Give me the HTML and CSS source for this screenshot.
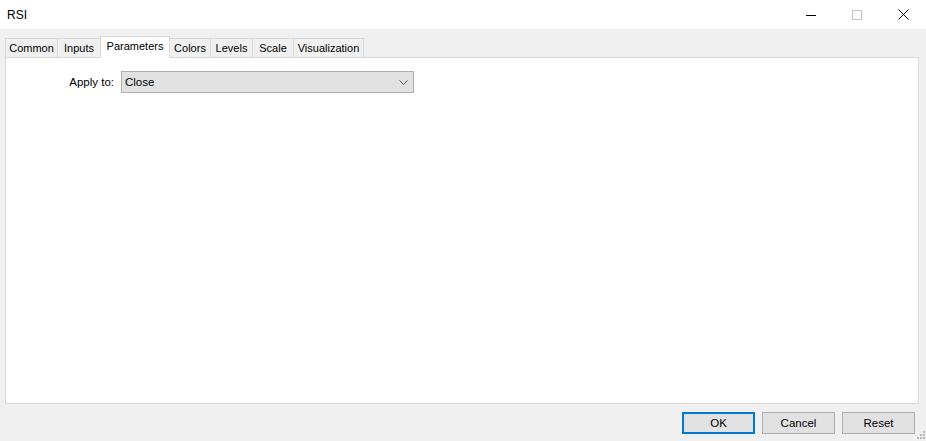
FILE: index.html
```html
<!DOCTYPE html>
<html lang="en">
<head>
    <meta charset="UTF-8">
    <title>RSI</title>
    <link rel="stylesheet" href="styles.css">
</head>
<body>
    <div class="window">
        <div class="titlebar">
            <span class="title">RSI</span>
            <div class="win-controls">
                <div class="win-btn">
                    <svg width="10" height="10" viewBox="0 0 10 10"><path d="M0 5.5H10" stroke="#000" stroke-width="1"/></svg>
                </div>
                <div class="win-btn">
                    <svg width="10" height="10" viewBox="0 0 10 10"><rect x="0.5" y="0.5" width="9" height="9" fill="none" stroke="#c4c4c4" stroke-width="1"/></svg>
                </div>
                <div class="win-btn">
                    <svg width="11" height="11" viewBox="0 0 11 11"><path d="M0.5 0.5L10.5 10.5M10.5 0.5L0.5 10.5" stroke="#000" stroke-width="1"/></svg>
                </div>
            </div>
        </div>

        <div class="content">
            <div class="tabs">
                <div class="tab tab-common">Common</div>
                <div class="tab tab-inputs">Inputs</div>
                <div class="tab tab-params active">Parameters</div>
                <div class="tab tab-colors">Colors</div>
                <div class="tab tab-levels">Levels</div>
                <div class="tab tab-scale">Scale</div>
                <div class="tab tab-vis">Visualization</div>
            </div>

            <div class="panel">
                <div class="field-row">
                    <label class="field-label">Apply to:</label>
                    <div class="select">
                        <span>Close</span>
                        <svg width="9" height="5" viewBox="0 0 9 5"><path d="M0.5 0.5L4.5 4.5L8.5 0.5" fill="none" stroke="#555" stroke-width="1"/></svg>
                    </div>
                </div>
            </div>

            <div class="footer">
                <button class="btn default">OK</button>
                <button class="btn">Cancel</button>
                <button class="btn">Reset</button>
                <div class="grip">
                    <svg width="8" height="8" viewBox="0 0 8 8" fill="#b8b8b8">
                        <rect x="6" y="0" width="2" height="2"/>
                        <rect x="3" y="3" width="2" height="2"/>
                        <rect x="6" y="3" width="2" height="2"/>
                        <rect x="0" y="6" width="2" height="2"/>
                        <rect x="3" y="6" width="2" height="2"/>
                        <rect x="6" y="6" width="2" height="2"/>
                    </svg>
                </div>
            </div>
        </div>
    </div>
</body>
</html>
```

FILE: styles.css
```css
* {
    box-sizing: border-box;
    margin: 0;
    padding: 0;
}

body {
    font-family: "Liberation Sans", Arial, sans-serif;
    font-size: 11.5px;
    color: #000;
    background-color: #f0f0f0;
    width: 926px;
    height: 441px;
    overflow: hidden;
}

.window {
    display: flex;
    flex-direction: column;
    height: 100%;
}

.titlebar {
    height: 30px;
    background-color: #fff;
    display: flex;
    align-items: center;
    justify-content: space-between;
    border-bottom: 1px solid #f0f0f0;
}

.title {
    padding-left: 7px;
    font-size: 12px;
}

.win-controls {
    display: flex;
    height: 100%;
}

.win-btn {
    width: 46px;
    height: 100%;
    display: flex;
    align-items: center;
    justify-content: center;
}

.content {
    flex: 1;
    display: flex;
    flex-direction: column;
    padding: 6px 7px 0 5px;
}

.tabs {
    display: flex;
    align-items: flex-end;
    height: 21px;
}

.tab {
    height: 19px;
    font-size: 11px;
    display: flex;
    align-items: center;
    justify-content: center;
    background-color: #f0f0f0;
    border: 1px solid #d9d9d9;
    border-bottom: none;
    margin-right: -1px;
}

.tab-common { width: 53px; }
.tab-inputs { width: 44px; }
.tab-params { width: 70px; }
.tab-colors { width: 42px; }
.tab-levels { width: 43px; }
.tab-scale { width: 42px; }
.tab-vis { width: 71px; }

.tab.active {
    background-color: #fff;
    position: relative;
    z-index: 1;
    margin-bottom: -1px;
    height: 22px;
    padding-bottom: 3px;
}

.panel {
    height: 347px;
    background-color: #fff;
    border: 1px solid #d9d9d9;
    padding: 13px 0 0 0;
}

.field-row {
    display: flex;
    align-items: center;
}

.field-label {
    width: 115px;
    text-align: right;
    padding-right: 7px;
}

.select {
    width: 293px;
    height: 22px;
    background-color: #e1e1e1;
    border: 1px solid #adadad;
    display: flex;
    align-items: center;
    justify-content: space-between;
    padding: 0 5px 0 3px;
}

.footer {
    flex: 1;
    display: flex;
    justify-content: flex-end;
    align-items: flex-start;
    padding: 8px 4px 0 0;
    gap: 7px;
    position: relative;
}

.btn {
    font-family: inherit;
    font-size: 11.5px;
    width: 73px;
    height: 22px;
    background-color: #e1e1e1;
    border: 1px solid #adadad;
    color: #000;
}

.btn.default {
    border: 2px solid #0078d7;
}

.grip {
    position: absolute;
    right: -6px;
    bottom: 2px;
    line-height: 0;
}
```
